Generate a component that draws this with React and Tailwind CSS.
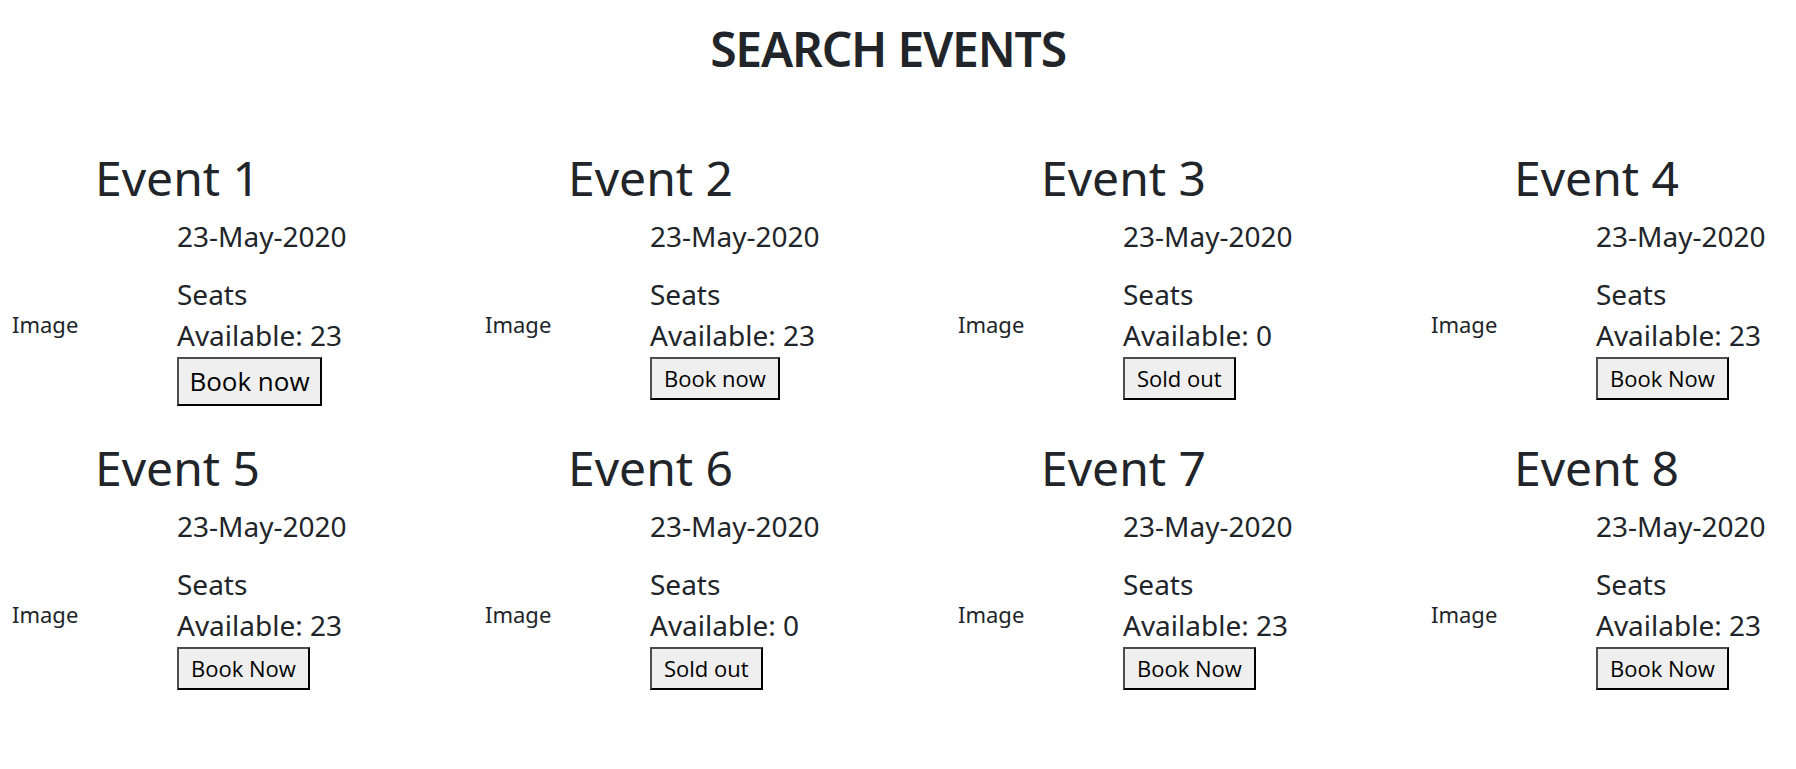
const events = [
    { name: "Event 1", seats: 23, label: "Book now", big: true },
    { name: "Event 2", seats: 23, label: "Book now" },
    { name: "Event 3", seats: 0, label: "Sold out" },
    { name: "Event 4", seats: 23, label: "Book Now" },
    { name: "Event 5", seats: 23, label: "Book Now" },
    { name: "Event 6", seats: 0, label: "Sold out" },
    { name: "Event 7", seats: 23, label: "Book Now" },
    { name: "Event 8", seats: 23, label: "Book Now" },
]

function EventCard({ event }) {
    return (
        <div className="w-[473px] h-[290px] shrink-0 text-[#212529]">
            <h2 className="pl-[95px] text-[48px] leading-none">{event.name}</h2>
            <div className="flex mt-[20px]">
                <div className="w-[177px] shrink-0 pl-[12px] pt-[91px] text-[22px] leading-none">Image</div>
                <div className="w-[180px]">
                    <p className="text-[28px] leading-none whitespace-nowrap">23-May-2020</p>
                    <p className="mt-[24px] text-[28px] leading-[41px]">Seats Available: {event.seats}</p>
                    <button
                        className={
                            event.big
                                ? "mt-[1px] h-[49px] w-[145px] text-[26px] bg-[#efefef] text-black border-2 border-t-[#4d4d4d] border-l-[#4d4d4d] border-r-black border-b-black"
                                : "mt-[1px] h-[43px] px-[12px] text-[22px] bg-[#efefef] text-black border-2 border-t-[#4d4d4d] border-l-[#4d4d4d] border-r-black border-b-black"
                        }
                        style={{ fontFamily: '"Open Sans", "Noto Sans", sans-serif' }}
                    >
                        {event.label}
                    </button>
                </div>
            </div>
        </div>
    )
}

export default function App() {
    return (
        <div
            className="w-[1796px] h-[769px] overflow-hidden bg-white text-[#212529]"
            style={{ fontFamily: '"Noto Sans", "DejaVu Sans", sans-serif' }}
        >
            <h1 className="pt-[20px] pr-[20px] text-center text-[48px] leading-[1.2] font-semibold tracking-tight">
                SEARCH EVENTS
            </h1>
            <div className="mt-[76px]">
                <div className="flex">
                    {events.slice(0, 4).map((e) => (
                        <EventCard key={e.name} event={e} />
                    ))}
                </div>
                <div className="flex">
                    {events.slice(4).map((e) => (
                        <EventCard key={e.name} event={e} />
                    ))}
                </div>
            </div>
        </div>
    )
}
